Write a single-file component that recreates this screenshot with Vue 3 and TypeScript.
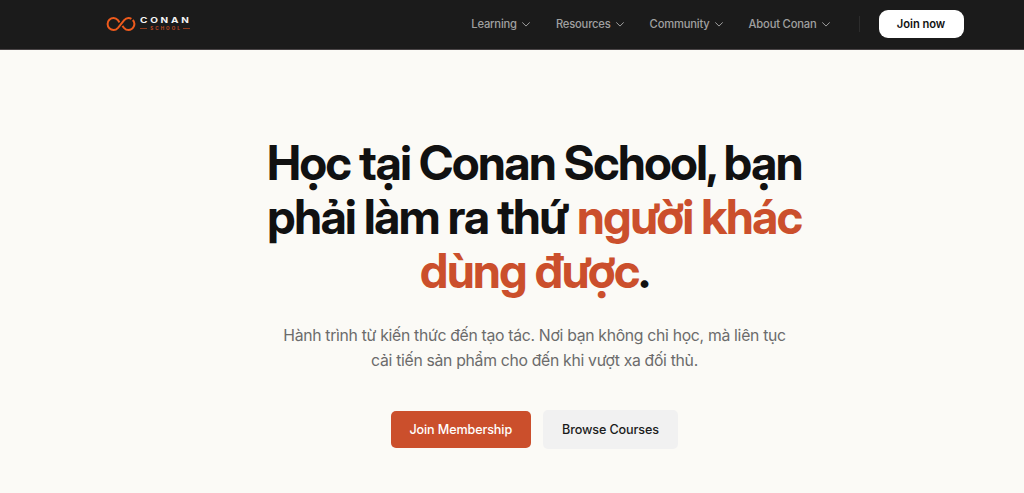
<script setup lang="ts">
interface NavItem {
  label: string
}

const navItems: NavItem[] = [
  { label: 'Learning' },
  { label: 'Resources' },
  { label: 'Community' },
  { label: 'About Conan' },
]
</script>

<template>
  <div class="page">
    <header class="header">
      <div class="header-inner">
        <a class="logo" aria-label="Conan School">
          <svg class="logo-mark" viewBox="0 0 30 16" fill="none" stroke="#ee5a1c" stroke-width="2">
            <path d="M13.5 6.3L11.9 4.2C10.6 2.6 9.3 2 7.6 2A6 6 0 0 0 7.6 14C9.4 14 10.7 13.3 12 11.8L18.2 4.2C19.5 2.6 20.8 2 22.4 2C23.6 2 24.5 2.3 25.4 2.9" />
            <path d="M26.8 4A6 6 0 0 1 22.4 14C20.6 14 19.3 13.3 18 11.8L16.4 9.8" />
          </svg>
          <span class="logo-text">
            <span class="logo-name">CONAN</span>
            <span class="logo-sub"><i></i><b>SCHOOL</b><i></i></span>
          </span>
        </a>
        <nav class="nav">
          <a v-for="item in navItems" :key="item.label" class="nav-item">
            {{ item.label }}
            <svg class="chevron" viewBox="0 0 8 5" fill="none">
              <path d="M0.5 0.6L4 4.1L7.5 0.6" stroke="currentColor" stroke-linecap="round" stroke-linejoin="round" />
            </svg>
          </a>
        </nav>
        <span class="divider"></span>
        <button class="join">Join now</button>
      </div>
    </header>
    <main class="hero">
      <h1 class="title">
        <span class="line">Học tại Conan School, bạn</span>
        <span class="line">phải làm ra thứ <em>người khác</em></span>
        <span class="line"><em>dùng được</em>.</span>
      </h1>
      <p class="subtitle">
        <span class="line">Hành trình từ kiến thức đến tạo tác. Nơi bạn không chỉ học, mà liên tục</span>
        <span class="line">cải tiến sản phẩm cho đến khi vượt xa đối thủ.</span>
      </p>
      <div class="actions">
        <button class="btn primary">Join Membership</button>
        <button class="btn secondary">Browse Courses</button>
      </div>
    </main>
  </div>
</template>

<style>
body {
  background: #fbfaf6;
  overflow: hidden;
}
</style>

<style scoped>
.page {
  width: 1069px;
  height: 493px;
  background: #fbfaf6;
  font-family: Inter, 'Liberation Sans', sans-serif;
}
.header {
  height: 50px;
  box-sizing: border-box;
  background: #1b1b1b;
  border-bottom: 1px solid #4a4547;
}
.header-inner {
  display: flex;
  align-items: center;
  height: 48px;
  padding: 0 105.5px 0 106px;
}
.logo {
  display: flex;
  align-items: center;
  margin-right: auto;
}
.logo-mark {
  width: 30px;
  height: 16px;
}
.logo-text {
  display: flex;
  flex-direction: column;
  width: 50px;
  margin-left: 4px;
}
.logo-name {
  color: #f4f4f4;
  font-size: 7.8px;
  font-weight: 700;
  line-height: 8px;
  letter-spacing: 2.15px;
  transform: scaleX(1.28);
  transform-origin: left;
}
.logo-sub {
  display: flex;
  align-items: center;
  justify-content: space-between;
  height: 7px;
  margin-top: 1px;
}
.logo-sub i {
  width: 7px;
  height: 1px;
  background: #8e3b1d;
}
.logo-sub b {
  color: #c54c20;
  font-size: 4.5px;
  font-weight: 700;
  line-height: 7px;
  letter-spacing: 2.1px;
  margin-right: -2.1px;
}
.nav {
  display: flex;
  gap: 26px;
}
.nav-item {
  display: flex;
  align-items: center;
  gap: 5px;
  color: #a0a0a0;
  font-size: 11.2px;
  font-weight: 500;
  line-height: 16px;
  letter-spacing: -0.18px;
  white-space: nowrap;
}
.chevron {
  width: 8px;
  height: 5px;
}
.divider {
  width: 1px;
  height: 16px;
  margin: 0 19px 0 29px;
  background: #2c2c2c;
}
.join {
  width: 85px;
  height: 28px;
  padding: 0;
  border: 0;
  border-radius: 9px;
  background: #fff;
  color: #111;
  font: 600 11.2px/28px Inter, sans-serif;
  letter-spacing: -0.05px;
}
.hero {
  display: flex;
  flex-direction: column;
  align-items: center;
  padding-top: 86px;
}
.line {
  display: block;
  white-space: nowrap;
}
.title {
  margin: 0;
  color: #111;
  font-family: 'Inter Display', Inter, sans-serif;
  font-size: 47.3px;
  font-weight: 700;
  line-height: 54px;
  letter-spacing: -1.45px;
  text-align: center;
}
.title em {
  color: #cb4f2c;
  font-style: normal;
}
.subtitle {
  margin: 25px 0 0;
  color: #6b6b6b;
  font-size: 15.75px;
  line-height: 25.3px;
  letter-spacing: -0.3px;
  text-align: center;
}
.actions {
  display: flex;
  align-items: center;
  gap: 12.5px;
  margin-top: 36px;
}
.btn {
  padding: 0;
  border: 0;
  border-radius: 5px;
  font: 500 12.6px/37px Inter, sans-serif;
  letter-spacing: -0.12px;
}
.primary {
  width: 139.5px;
  height: 37px;
  background: #cb4f2c;
  color: #fff;
}
.secondary {
  width: 135px;
  height: 39px;
  background: #f1f1f1;
  color: #1b1b1b;
}
</style>
